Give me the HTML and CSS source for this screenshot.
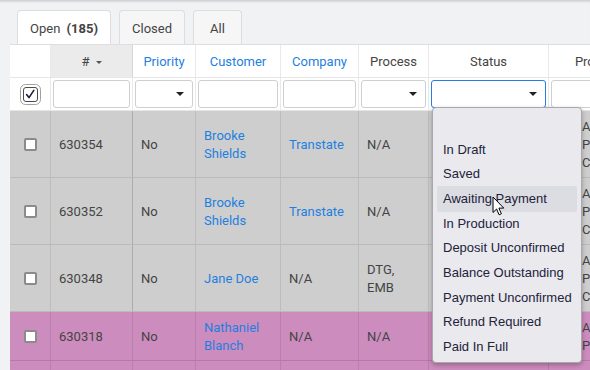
FILE: index.html
```html
<!DOCTYPE html>
<html>
<head>
<meta charset="utf-8">
<link rel="stylesheet" href="styles.css">
</head>
<body>
<div class="page">
  <div class="tabs">
    <div class="tab active">Open <b class="count">(185)</b></div>
    <div class="tab">Closed</div>
    <div class="tab tab-all">All</div>
  </div>
  <div class="table">
    <div class="row head">
      <div class="cell"></div>
      <div class="cell sorted">#<span class="caret"></span></div>
      <div class="cell link">Priority</div>
      <div class="cell link">Customer</div>
      <div class="cell link">Company</div>
      <div class="cell">Process</div>
      <div class="cell">Status</div>
      <div class="cell">Production</div>
    </div>
    <div class="row filters">
      <div class="cell center">
        <svg class="allbox" width="21" height="21" viewBox="0 0 21 21">
          <rect x="0.5" y="0.5" width="20" height="20" rx="5" fill="#fff" stroke="#a0a0a0"/>
          <rect x="3.5" y="3.5" width="14" height="14" rx="2.5" fill="#fff" stroke="#4a4a4a"/>
          <path d="M6.6 10.6 L9 13.6 L13.8 6.4" fill="none" stroke="#1c1c3a" stroke-width="1.6" stroke-linecap="round" stroke-linejoin="round"/>
        </svg>
      </div>
      <div class="cell"><div class="input"></div></div>
      <div class="cell"><div class="input select"><span class="arrow"></span></div></div>
      <div class="cell"><div class="input"></div></div>
      <div class="cell"><div class="input"></div></div>
      <div class="cell"><div class="input select"><span class="arrow"></span></div></div>
      <div class="cell"><div class="input select focus"><span class="arrow"></span></div></div>
      <div class="cell"><div class="input"></div></div>
    </div>
    <div class="row data gray">
      <div class="cell center"><span class="box"></span></div>
      <div class="cell">630354</div>
      <div class="cell">No</div>
      <div class="cell"><a class="lnk">Brooke Shields</a></div>
      <div class="cell"><a class="lnk">Transtate</a></div>
      <div class="cell">N/A</div>
      <div class="cell"></div>
      <div class="cell last">Awaiting<br>Payment<br>Confirmation</div>
    </div>
    <div class="row data gray">
      <div class="cell center"><span class="box"></span></div>
      <div class="cell">630352</div>
      <div class="cell">No</div>
      <div class="cell"><a class="lnk">Brooke Shields</a></div>
      <div class="cell"><a class="lnk">Transtate</a></div>
      <div class="cell">N/A</div>
      <div class="cell"></div>
      <div class="cell last">Awaiting<br>Payment<br>Confirmation</div>
    </div>
    <div class="row data gray">
      <div class="cell center"><span class="box"></span></div>
      <div class="cell">630348</div>
      <div class="cell">No</div>
      <div class="cell"><a class="lnk">Jane Doe</a></div>
      <div class="cell">N/A</div>
      <div class="cell">DTG,<br>EMB</div>
      <div class="cell"></div>
      <div class="cell last">Awaiting<br>Payment<br>Confirmation</div>
    </div>
    <div class="row data pink">
      <div class="cell center"><span class="box"></span></div>
      <div class="cell">630318</div>
      <div class="cell">No</div>
      <div class="cell"><a class="lnk">Nathaniel Blanch</a></div>
      <div class="cell">N/A</div>
      <div class="cell">N/A</div>
      <div class="cell"></div>
      <div class="cell last">Awaiting<br>Payment</div>
    </div>
    <div class="row data pink">
      <div class="cell center"><span class="box"></span></div>
      <div class="cell">630317</div>
      <div class="cell">No</div>
      <div class="cell"><a class="lnk">Jane Doe</a></div>
      <div class="cell">N/A</div>
      <div class="cell">N/A</div>
      <div class="cell"></div>
      <div class="cell last">Awaiting<br>Payment</div>
    </div>
  </div>
</div>

<div class="dropdown">
  <div class="opt"></div>
  <div class="opt">In Draft</div>
  <div class="opt">Saved</div>
  <div class="opt hover">Awaiting Payment</div>
  <div class="opt">In Production</div>
  <div class="opt">Deposit Unconfirmed</div>
  <div class="opt">Balance Outstanding</div>
  <div class="opt">Payment Unconfirmed</div>
  <div class="opt">Refund Required</div>
  <div class="opt">Paid In Full</div>
</div>

<svg class="cursor" width="14" height="21" viewBox="0 0 14 21">
  <path d="M1 1 V16.5 L4.6 13 L7.1 18.8 L9.4 17.8 L6.9 12.1 H11.8 Z" fill="#fff" stroke="#000" stroke-width="1" stroke-linejoin="miter"/>
</svg>
</body>
</html>
```

FILE: styles.css
```css
html, body {
  margin: 0;
  padding: 0;
}

body {
  width: 590px;
  height: 370px;
  overflow: hidden;
  position: relative;
  background: #f1f2f4;
  font-family: Roboto, "Liberation Sans", sans-serif;
  font-size: 13px;
  color: #444;
  box-shadow: inset 0 3px 3px -2px rgba(0, 0, 0, 0.2);
}

.page {
  padding: 10px 0 0 10px;
}

.tabs {
  display: flex;
  gap: 8px;
  padding-left: 7px;
}

.tab {
  height: 34px;
  box-sizing: border-box;
  border: 1px solid #dddddf;
  border-bottom: 0;
  border-radius: 4px 4px 0 0;
  background: #f6f6f7;
  padding: 1px 12px 0;
  line-height: 34px;
  color: #444;
}

.tab.active {
  background: #fff;
}

.count {
  margin-left: 3px;
  font-weight: 700;
}

.tab-all {
  width: 49px;
  padding: 1px 0 0;
  text-align: center;
}

.table {
  width: 655px;
  background: #fff;
  border-top: 1px solid #dedede;
}

.row {
  display: grid;
  grid-template-columns: 41px 82px 63px 85px 78px 70px 120px 116px;
}

.cell {
  box-sizing: border-box;
  display: flex;
  align-items: center;
  padding: 7px 8px 5px;
  line-height: 18px;
  border-right: 1px solid #e9e9e9;
  min-width: 0;
}

.center {
  justify-content: center;
}

.head {
  border-bottom: 1px solid #e6e6e6;
}

.head .cell {
  padding: 8px 4px 6px;
  justify-content: center;
  white-space: nowrap;
}

.head .sorted {
  background: #ebebeb;
  border-right-color: #d6d6d6;
}

.caret {
  display: inline-block;
  margin-left: 6px;
  border-left: 3px solid transparent;
  border-right: 3px solid transparent;
  border-top: 3px solid #555;
}

.link {
  color: #1f80e0;
}

.filters {
  border-bottom: 1px solid #e6e6e6;
}

.filters .cell {
  padding: 2px;
}

.filters .center {
  padding: 2px 0;
}

.input {
  flex: 1;
  height: 28px;
  box-sizing: border-box;
  border: 1px solid #cfcfcf;
  border-radius: 3px;
  background: #fff;
  display: flex;
  align-items: center;
  justify-content: flex-end;
  padding-right: 8px;
}

.input.focus {
  border-color: #2a7be4;
}

.arrow {
  display: block;
  border-left: 4px solid transparent;
  border-right: 4px solid transparent;
  border-top: 4px solid #222;
}

.data .cell {
  padding: 7px 8px 5px;
}

.data .center {
  padding: 6px 0;
}

.gray {
  background: #cecece;
  border-bottom: 1px solid #bababa;
}

.gray .cell {
  border-right-color: #bdbdbd;
}

.gray .cell:nth-child(2) {
  border-right-color: #acacac;
}

.pink {
  background: #cd8cbe;
  border-bottom: 1px solid #b479a7;
}

.pink .cell {
  border-right-color: #ba7fac;
}

.data .last {
  padding-left: 33px;
  white-space: nowrap;
}

.lnk {
  color: #1f80e0;
}

.box {
  display: block;
  width: 13px;
  height: 13px;
  box-sizing: border-box;
  border: 2px solid #8b8b8b;
  border-radius: 2px;
  background: #fff;
}

.allbox {
  display: block;
}

.dropdown {
  position: absolute;
  left: 432px;
  top: 107px;
  width: 150px;
  height: 256px;
  box-sizing: border-box;
  padding: 5px 4px 3px;
  background: #e9e9ee;
  border: 1px solid #a9a9ad;
  border-radius: 4px;
  box-shadow: 0 2px 5px rgba(0, 0, 0, 0.28);
  font-family: "Liberation Sans", Arial, sans-serif;
  font-size: 13px;
  color: #23233a;
}

.opt {
  height: 24.67px;
  line-height: 24.67px;
  padding: 0 6px;
  white-space: nowrap;
}

.opt.hover {
  background: #dcdce3;
  border-radius: 2px;
  margin-top: -1px;
  padding-top: 1px;
}

.cursor {
  position: absolute;
  left: 492px;
  top: 196px;
}
```
